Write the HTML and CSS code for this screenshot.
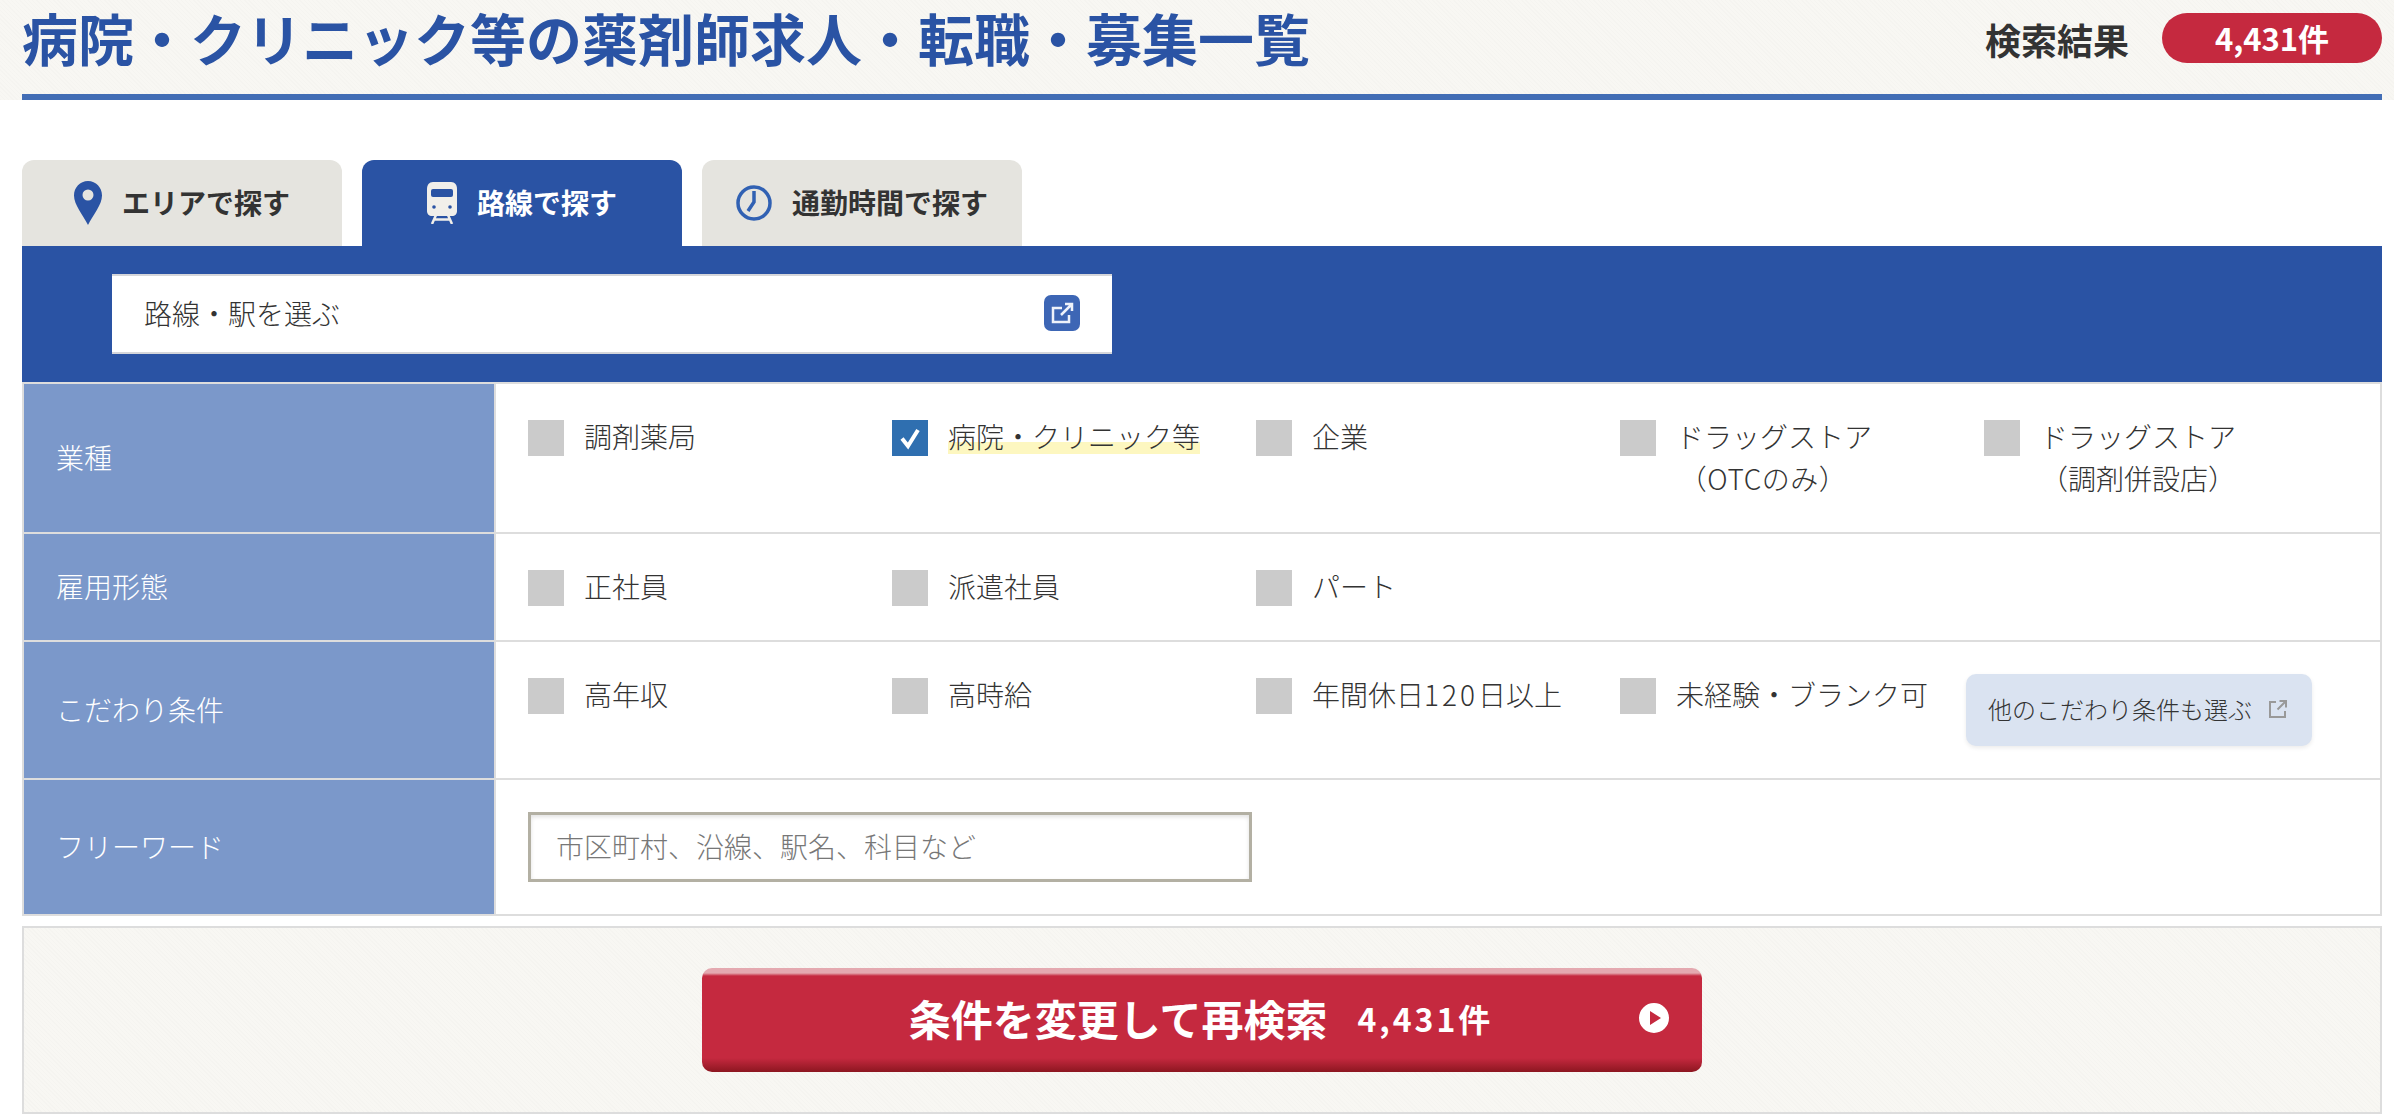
FILE: index.html
```html
<!DOCTYPE html>
<html lang="ja">
<head>
  <meta charset="utf-8">
  <title>病院・クリニック等の薬剤師求人・転職・募集一覧</title>
  <link rel="stylesheet" href="styles.css">
</head>
<body>
  <header class="page-head">
    <div class="page-head-inner">
      <h1>病院・クリニック等の薬剤師求人・転職・募集一覧</h1>
      <div class="result">
        <span class="result-label">検索結果</span>
        <span class="result-count">4,431件</span>
      </div>
    </div>
  </header>

  <main class="content">
    <div class="tabs">
      <a class="tab" href="#">
        <svg class="icon-pin" viewBox="0 0 28 44"><path fill-rule="evenodd" d="M14 0C6 0 0 6.500 0 14.500C0 24 9 34 14 44C19 34 28 24 28 14.500C28 6.500 22 0 14 0ZM14 8.500a5.500 5.500 0 1 1 0 11a5.500 5.500 0 1 1 0-11Z"/></svg>
        エリアで探す
      </a>
      <a class="tab tab-active" href="#">
        <svg class="icon-train" viewBox="0 0 30 42">
          <path class="train-body" d="M6 0H24C28 0 30 3 30 7V29C30 32 28 34 25 34H5C2 34 0 32 0 29V7C0 3 2 0 6 0Z"/>
          <rect class="train-glass" x="4" y="7" width="22" height="8" rx="2"/>
          <circle class="train-glass" cx="7" cy="25" r="1.800"/>
          <circle class="train-glass" cx="23" cy="25" r="1.800"/>
          <path class="train-legs" d="M9 33L5 42M21 33L25 42M7.500 37.500H22.500"/>
        </svg>
        路線で探す
      </a>
      <a class="tab" href="#">
        <svg class="icon-clock" viewBox="0 0 36 36"><circle cx="18" cy="18" r="16"/><path d="M18 6V17L12 26"/></svg>
        通勤時間で探す
      </a>
    </div>

    <div class="line-panel">
      <a class="line-select" href="#">
        路線・駅を選ぶ
        <span class="line-select-icon">
          <svg viewBox="0 0 36 36"><path d="M18 13H9V27H25V20M21 9H28V16M28 9L17 20"/></svg>
        </span>
      </a>
    </div>

    <div class="conditions">
      <div class="row">
        <div class="row-label">業種</div>
        <div class="row-body options">
          <label class="option"><span class="box"></span><span class="option-text">調剤薬局</span></label>
          <label class="option"><span class="box box-on"><svg viewBox="0 0 36 36"><path d="M10 18.500L16 26L26 10"/></svg></span><span class="option-text marked">病院・クリニック等</span></label>
          <label class="option"><span class="box"></span><span class="option-text">企業</span></label>
          <label class="option"><span class="box"></span><span class="option-text two-line">ドラッグストア<br><span class="otc">（OTCのみ）</span></span></label>
          <label class="option"><span class="box"></span><span class="option-text two-line">ドラッグストア<br>（調剤併設店）</span></label>
        </div>
      </div>
      <div class="row">
        <div class="row-label">雇用形態</div>
        <div class="row-body options">
          <label class="option"><span class="box"></span><span class="option-text">正社員</span></label>
          <label class="option"><span class="box"></span><span class="option-text">派遣社員</span></label>
          <label class="option"><span class="box"></span><span class="option-text">パート</span></label>
        </div>
      </div>
      <div class="row">
        <div class="row-label">こだわり条件</div>
        <div class="row-body options options-more">
          <label class="option"><span class="box"></span><span class="option-text">高年収</span></label>
          <label class="option"><span class="box"></span><span class="option-text">高時給</span></label>
          <label class="option"><span class="box"></span><span class="option-text">年間休日<span class="num">120</span>日以上</span></label>
          <label class="option"><span class="box"></span><span class="option-text">未経験・ブランク可</span></label>
          <a class="more-link" href="#">
            他のこだわり条件も選ぶ
            <svg viewBox="0 0 20 20"><path d="M8 3H2V18H17V12M11.500 2H18V8.500M18 2L9.500 10.500"/></svg>
          </a>
        </div>
      </div>
      <div class="row">
        <div class="row-label">フリーワード</div>
        <div class="row-body keyword">
          <input class="keyword-input" type="text" placeholder="市区町村、沿線、駅名、科目など">
        </div>
      </div>
    </div>

    <div class="submit-box">
      <a class="submit" href="#">
        <span class="submit-text">条件を変更して再検索</span>
        <span class="submit-count">4,431件</span>
        <svg class="submit-arrow" viewBox="0 0 30 30"><path fill-rule="evenodd" d="M15 0a15 15 0 1 1 0 30a15 15 0 1 1 0-30ZM11 8V22L22 15Z"/></svg>
      </a>
    </div>
  </main>
</body>
</html>
```

FILE: styles.css
```css
* { box-sizing: border-box; }
body { margin: 0; background: #fff; color: #333; font-family: "Noto Sans CJK JP", "Noto Sans", sans-serif; font-size: 28px; font-weight: 300; }
a { color: inherit; text-decoration: none; }
svg { display: block; flex: none; }

.page-head { height: 100px; padding: 0 12px 0 22px; background: #f8f7f3 repeating-linear-gradient(45deg, rgba(0, 0, 0, .012) 0, rgba(0, 0, 0, .012) 1px, transparent 1px, transparent 3px); }
.page-head-inner { display: flex; align-items: center; justify-content: space-between; height: 100%; border-bottom: 6px solid #426db5; padding-bottom: 18px; }
h1 { margin: 0 0 2px; color: #2a53a4; font-size: 56px; font-weight: 700; line-height: 1; letter-spacing: 0; }
.result { display: flex; align-items: center; gap: 33px; }
.result-label { margin-top: 2px; font-size: 36px; font-weight: 700; line-height: 1; }
.result-count { display: flex; align-items: center; justify-content: center; width: 220px; height: 50px; padding-bottom: 2px; border-radius: 25px; background: #c5293f; color: #fff; font-size: 31px; font-weight: 700; }

.content { padding: 60px 12px 0 22px; }

.tabs { display: flex; gap: 20px; }
.tab { display: flex; align-items: center; justify-content: center; gap: 20px; width: 320px; height: 86px; padding-bottom: 3px; border-radius: 12px 12px 0 0; background: #e5e4df; font-weight: 700; }
.tab svg { margin-top: 3px; }
.tab-active { background: #2a53a4; color: #fff; }
.icon-pin { width: 28px; height: 44px; fill: #2a53a4; }
.icon-train { width: 30px; height: 42px; }
.train-body { fill: #f1efea; }
.train-glass { fill: #2a53a4; }
.train-legs { fill: none; stroke: #f1efea; stroke-width: 2.500; }
.icon-clock { width: 36px; height: 36px; fill: none; stroke: #3161b3; stroke-width: 3.500; }

.line-panel { height: 136px; padding: 28px 0 0 90px; background: #2a53a4; }
.line-select { display: flex; align-items: center; justify-content: space-between; width: 1000px; height: 80px; padding: 0 32px 2px; background: #fff; border-top: 2px solid #d5d6da; border-bottom: 2px solid #d5d6da; }
.line-select-icon { width: 36px; height: 36px; border-radius: 7px; background: #3d66b5; }
.line-select-icon svg { width: 36px; height: 36px; fill: none; stroke: #eef2fa; stroke-width: 2.500; }

.conditions { border: 2px solid #ddd; border-bottom: 0; }
.row { display: flex; border-bottom: 2px solid #ddd; }
.row-label { display: flex; align-items: center; flex: none; width: 472px; padding: 0 0 2px 32px; background: #7b98ca; border-right: 2px solid #ddd; color: #fff; }
.row-body { flex: 1; padding: 33px 0 33px 32px; }

.options { display: grid; grid-template-columns: repeat(5, 364px); align-items: start; }
.option { display: flex; gap: 20px; line-height: 42px; }
.option-text { margin-top: -2px; white-space: nowrap; }
.box { flex: none; width: 36px; height: 36px; margin-top: 3px; background: #cbcbcb; }
.box-on { background: #2f6fb0; }
.box-on svg { width: 36px; height: 36px; fill: none; stroke: #fff; stroke-width: 4; }
.marked { align-self: flex-start; height: 42px; background: linear-gradient(transparent 65%, #fdf7c0 65%, #fdf7c0 92%, transparent 92%); }
.two-line { text-align: center; }
.otc { padding-right: 22px; letter-spacing: .5px; }
.num { letter-spacing: 3px; }

.options-more { padding-bottom: 32px; }
.more-link { display: flex; align-items: center; gap: 16px; width: 346px; height: 72px; margin: -1px 0 0 -18px; padding: 0 0 3px 22px; border-radius: 10px; background: #dae3f1; box-shadow: 0 2px 4px rgba(0, 0, 0, .08); font-size: 24px; white-space: nowrap; }
.more-link svg { width: 20px; height: 20px; fill: none; stroke: #999; stroke-width: 2; }

.keyword { padding: 32px 0 32px 32px; }
.keyword-input { display: block; width: 724px; height: 70px; padding: 0 26px 3px 25px; border: 3px solid #b3b0a3; border-radius: 0; box-shadow: inset 0 2px 4px rgba(0, 0, 0, .12); outline: 0; background: #fff; color: #333; font: inherit; }
.keyword-input::placeholder { color: #777; opacity: 1; }

.submit-box { display: flex; justify-content: center; margin-top: 10px; padding: 40px 0; height: 188px; border: 2px solid #ddd; background: #f8f7f3 repeating-linear-gradient(45deg, rgba(0, 0, 0, .012) 0, rgba(0, 0, 0, .012) 1px, transparent 1px, transparent 3px); }
.submit { position: relative; display: flex; align-items: center; justify-content: center; gap: 30px; width: 1000px; height: 104px; padding: 0 2px 5px 0; border-radius: 10px; background: linear-gradient(#e4a9b0 0, #e4a9b0 5px, #c5293f 8px, #c5293f 90px, #8c1620 100%); color: #fff; font-weight: 700; }
.submit-text { font-size: 42px; }
.submit-count { font-size: 32px; letter-spacing: 3px; }
.submit-arrow { position: absolute; right: 33px; top: 35px; width: 30px; height: 30px; fill: #fff; }
```
